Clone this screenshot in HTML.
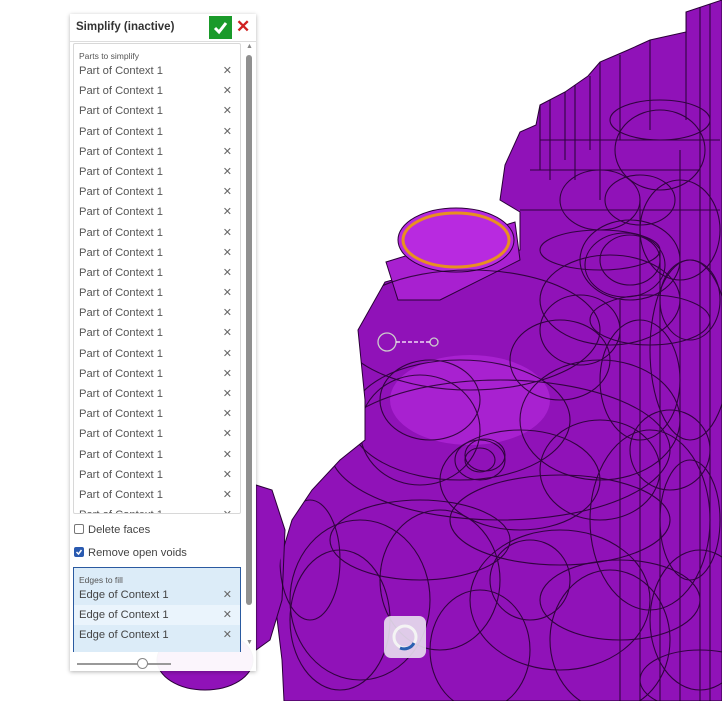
<!DOCTYPE html>
<html><head><meta charset="utf-8"><style>
body{margin:0;width:722px;height:701px;overflow:hidden;background:#fff;font-family:"Liberation Sans",sans-serif;position:relative}
svg.bg{position:absolute;left:0;top:0}
.panel{position:absolute;left:70px;top:14px;width:186px;height:657px;background:rgba(255,255,255,0.96);box-shadow:0 1px 4px rgba(0,0,0,.3)}
.hdr{height:27px;border-bottom:1px solid #ddd;position:relative}
.hdr .t{position:absolute;left:6px;top:7px;font-size:11.5px;font-weight:bold;color:#333}
.ok{position:absolute;left:139px;top:2px;width:23px;height:23px;background:#1a9a2a}
.xx{position:absolute;left:166px;top:3px;color:#d02020;font-size:17px;font-weight:bold}
.list{position:absolute;left:3px;top:29px;width:166px;height:469px;border:1px solid #d8d8d8;border-radius:2px;overflow:hidden}
.cap{font-size:8.5px;color:#555;padding:7px 0 0 5px;height:10px}
.row{height:20.2px;line-height:20px;font-size:11.2px;color:#555;padding-left:5px;position:relative}
.row span{position:absolute;right:8px;top:0;color:#666;font-size:11px}
.thumb{position:absolute;left:176px;top:41px;width:6px;height:550px;background:#909090;border-radius:3px}
.cb{position:absolute;left:4px;font-size:11.2px;color:#444}
.cb i{display:inline-block;width:8px;height:8px;border:1px solid #777;border-radius:2px;vertical-align:-1px;margin-right:4px;position:relative}
.edges{position:absolute;left:3px;top:553px;width:166px;height:84px;background:#dcecf8;border:1px solid #2a5aa0;border-bottom:none;overflow:hidden}
.edges .row{color:#444}
</style></head><body>
<svg class="bg" width="722" height="701">
<defs><clipPath id="c"><polygon points="722,0 686,12 686,32 650,40 628,50 600,62 588,76 565,92 540,105 536,125 520,132 505,165 500,200 520,212 520,250 470,265 410,275 385,282 358,330 365,400 365,440 340,460 312,490 292,520 280,560 276,610 282,660 284,701 722,701"/><polygon points="386,262 398,300 440,300 520,260 515,200 400,220"/></clipPath></defs>
<g fill="#9012b8" stroke="#2a0038" stroke-width="1">
<polygon points="722,0 686,12 686,32 650,40 628,50 600,62 588,76 565,92 540,105 536,125 520,132 505,165 500,200 520,212 520,250 470,265 410,275 385,282 358,330 365,400 365,440 340,460 312,490 292,520 280,560 276,610 282,660 284,701 722,701"/>
<polygon points="256,485 272,490 285,530 282,600 270,640 256,650"/>
<ellipse cx="205" cy="660" rx="48" ry="30"/>
</g>
<polygon points="386,262 398,300 440,300 520,260 515,222" fill="#a820d0" stroke="#2a0038"/>
<ellipse cx="456" cy="240" rx="58" ry="32" fill="#b82ae0" stroke="#2a0038"/>
<ellipse cx="456" cy="240" rx="53" ry="27" fill="none" stroke="#e89020" stroke-width="3"/>
<ellipse cx="470" cy="400" rx="80" ry="45" fill="#c030e8" opacity=".5"/>
<g fill="none" stroke="#1a0022" stroke-width="1.1" opacity=".8" clip-path="url(#c)">
<ellipse cx="470" cy="330" rx="130" ry="60"/>
<ellipse cx="460" cy="420" rx="110" ry="60"/>
<ellipse cx="500" cy="450" rx="170" ry="70"/>
<ellipse cx="630" cy="260" rx="50" ry="40"/>
<ellipse cx="630" cy="260" rx="30" ry="25"/>
<ellipse cx="625" cy="265" rx="40" ry="32"/>
<ellipse cx="610" cy="300" rx="70" ry="45"/>
<ellipse cx="600" cy="420" rx="80" ry="60"/>
<ellipse cx="480" cy="460" rx="25" ry="20"/>
<ellipse cx="480" cy="460" rx="15" ry="12"/>
<ellipse cx="485" cy="455" rx="20" ry="16"/>
<ellipse cx="440" cy="580" rx="60" ry="70"/>
<ellipse cx="360" cy="600" rx="70" ry="80"/>
<ellipse cx="340" cy="620" rx="50" ry="70"/>
<ellipse cx="560" cy="600" rx="90" ry="70"/>
<ellipse cx="660" cy="150" rx="45" ry="40"/>
<ellipse cx="690" cy="350" rx="40" ry="90"/>
<ellipse cx="420" cy="540" rx="90" ry="40"/>
<ellipse cx="650" cy="520" rx="60" ry="90"/>
<ellipse cx="700" cy="620" rx="50" ry="70"/>
<ellipse cx="600" cy="200" rx="40" ry="30"/>
<ellipse cx="640" cy="200" rx="35" ry="25"/>
<ellipse cx="580" cy="330" rx="40" ry="35"/>
<ellipse cx="560" cy="360" rx="50" ry="40"/>
<ellipse cx="430" cy="400" rx="50" ry="40"/>
<ellipse cx="420" cy="430" rx="60" ry="55"/>
<ellipse cx="520" cy="480" rx="80" ry="50"/>
<ellipse cx="600" cy="470" rx="60" ry="50"/>
<ellipse cx="560" cy="520" rx="110" ry="45"/>
<ellipse cx="680" cy="230" rx="40" ry="50"/>
<ellipse cx="690" cy="300" rx="30" ry="40"/>
<ellipse cx="640" cy="380" rx="40" ry="60"/>
<ellipse cx="670" cy="450" rx="40" ry="40"/>
<ellipse cx="610" cy="640" rx="60" ry="70"/>
<ellipse cx="480" cy="650" rx="50" ry="60"/>
<ellipse cx="310" cy="560" rx="30" ry="60"/>
<ellipse cx="690" cy="520" rx="30" ry="60"/>
<ellipse cx="620" cy="600" rx="80" ry="40"/>
<ellipse cx="700" cy="680" rx="60" ry="30"/>
<ellipse cx="530" cy="580" rx="40" ry="40"/>
<ellipse cx="650" cy="320" rx="60" ry="25"/>
<ellipse cx="600" cy="250" rx="60" ry="20"/>
<ellipse cx="660" cy="120" rx="50" ry="20"/>
<path d="M540 105 L540 170 M565 92 L565 160 M590 76 L590 150 M620 55 L620 140 M650 40 L650 130 M686 12 L686 120 M700 0 L700 701 M660 250 L660 701 M620 300 L620 701 M710 0 L710 701 M680 150 L680 701 M640 200 L640 701 M600 60 L600 200 M575 85 L575 180 M550 100 L550 180 M530 170 L700 170 M520 210 L720 210 M540 140 L720 140"/>
</g>
<g stroke="#ccc" fill="none" stroke-width="1.3"><circle cx="387" cy="342" r="9"/><circle cx="434" cy="342" r="4"/><path d="M396 342 H430" stroke="#fff" stroke-dasharray="4 2"/></g>
<rect x="384" y="616" width="42" height="42" rx="7" fill="#e8e0ee" opacity=".9"/>
<circle cx="405" cy="637" r="11" fill="none" stroke="#f4f4f4" stroke-width="3"/>
<path d="M414 643 A11 11 0 0 1 400 648" fill="none" stroke="#2a60b0" stroke-width="3"/>
</svg>
<div class="panel">
<div class="hdr"><div class="t">Simplify (inactive)</div><div class="ok"><svg width="23" height="23"><path d="M6 12 L10 16 L17 7" stroke="#fff" stroke-width="3" fill="none"/></svg></div><div class="xx">✕</div></div>
<div class="list"><div class="cap">Parts to simplify</div>
<div class="row">Part of Context 1<span>✕</span></div><div class="row">Part of Context 1<span>✕</span></div><div class="row">Part of Context 1<span>✕</span></div><div class="row">Part of Context 1<span>✕</span></div><div class="row">Part of Context 1<span>✕</span></div><div class="row">Part of Context 1<span>✕</span></div><div class="row">Part of Context 1<span>✕</span></div><div class="row">Part of Context 1<span>✕</span></div><div class="row">Part of Context 1<span>✕</span></div><div class="row">Part of Context 1<span>✕</span></div><div class="row">Part of Context 1<span>✕</span></div><div class="row">Part of Context 1<span>✕</span></div><div class="row">Part of Context 1<span>✕</span></div><div class="row">Part of Context 1<span>✕</span></div><div class="row">Part of Context 1<span>✕</span></div><div class="row">Part of Context 1<span>✕</span></div><div class="row">Part of Context 1<span>✕</span></div><div class="row">Part of Context 1<span>✕</span></div><div class="row">Part of Context 1<span>✕</span></div><div class="row">Part of Context 1<span>✕</span></div><div class="row">Part of Context 1<span>✕</span></div><div class="row">Part of Context 1<span>✕</span></div><div class="row">Part of Context 1<span>✕</span></div>
</div>
<div class="cb" style="top:510px"><i></i>Delete faces</div>
<div class="cb" style="top:533px"><i style="background:#2a5ab0;border-color:#2a5ab0"><svg width="8" height="8" style="position:absolute;left:0;top:0"><path d="M1.5 4 L3.5 6 L6.5 2" stroke="#fff" stroke-width="1.5" fill="none"/></svg></i>Remove open voids</div>
<div class="edges"><div class="cap">Edges to fill</div>
<div class="row">Edge of Context 1<span>✕</span></div><div class="row" style="background:#eaf4fc">Edge of Context 1<span>✕</span></div><div class="row">Edge of Context 1<span>✕</span></div></div>
<div style="position:absolute;left:176px;top:29px;font-size:7px;color:#888">▲</div>
<div class="thumb"></div>
<div style="position:absolute;left:176px;top:625px;font-size:7px;color:#888">▼</div>
<div style="position:absolute;left:7px;top:649px;width:94px;height:2px;background:#999"></div>
<div style="position:absolute;left:67px;top:644px;width:9px;height:9px;border:1px solid #888;border-radius:50%;background:#fff"></div>
</div>
</body></html>
